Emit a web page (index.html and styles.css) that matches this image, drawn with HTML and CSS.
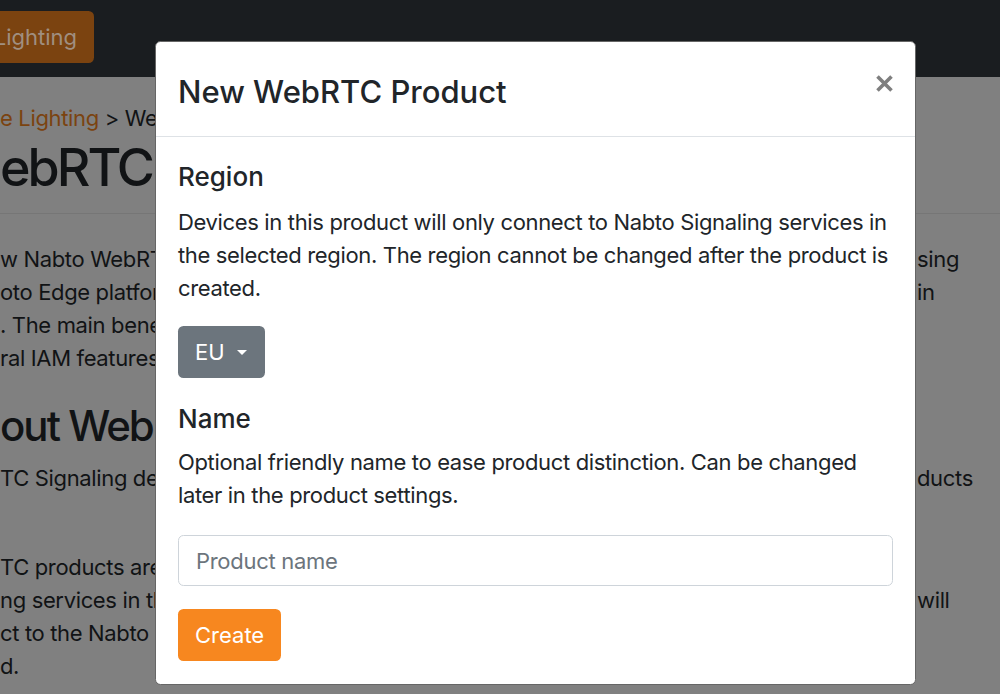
FILE: index.html
```html
<!DOCTYPE html>
<html>
<head>
    <title>New WebRTC Product</title>
    <meta name="viewport" content="width=device-width, initial-scale=1">
    <link rel="stylesheet" href="styles.css">
</head>

<body>
    <nav class="navbar">
        <a class="nav-btn" href="#">Lighting</a>
    </nav>

    <main class="page">
        <div class="crumbs"><a href="#">e Lighting</a> &gt; WebRTC</div>
        <h1 class="page-title">ebRTC</h1>
        <hr class="rule">

        <div class="line"><span class="left">w Nabto WebRTC Signaling products let devices connect</span><span class="right">sing</span></div>
        <div class="line"><span class="left">oto Edge platform to browsers and mobile apps</span><span class="right">in</span></div>
        <div class="line"><span class="left">. The main benefit is simple integration with</span><span class="right"></span></div>
        <div class="line"><span class="left">ral IAM features</span><span class="right"></span></div>

        <h2 class="page-sub">out WebRTC</h2>
        <div class="line"><span class="left">TC Signaling devices work differently from Edge products</span><span class="right">ducts</span></div>
        <div class="line"><span class="left"></span><span class="right"></span></div>

        <div class="line gap"><span class="left">TC products are bound to a region. Devices use the</span><span class="right"></span></div>
        <div class="line"><span class="left">ng services in the selected region only, and clients</span><span class="right">will</span></div>
        <div class="line"><span class="left">ct to the Nabto Signaling service of that region</span><span class="right"></span></div>
        <div class="line"><span class="left">d.</span><span class="right"></span></div>
    </main>

    <div class="modal">
        <div class="modal-header">
            <h5 class="modal-title">New WebRTC Product</h5>
            <button class="close" type="button" aria-label="Close">
                <svg width="17" height="17" viewBox="0 0 17 17">
                    <path d="M1.5 1.5 L15.5 15.5 M15.5 1.5 L1.5 15.5" stroke="#7f7f7f" stroke-width="3.6" fill="none"/>
                </svg>
            </button>
        </div>

        <div class="modal-body">
            <h5 class="section-title first">Region</h5>
            <p class="intro">Devices in this product will only connect to Nabto Signaling services in the selected region. The region cannot be changed after the product is created.</p>

            <div class="dropdown">
                <button class="btn btn-gray" type="button">EU <span class="caret"></span></button>
            </div>

            <h5 class="section-title">Name</h5>
            <p>Optional friendly name to ease product distinction. Can be changed later in the product settings.</p>

            <input class="field" type="text" placeholder="Product name">

            <button class="btn btn-orange" type="button">Create</button>
        </div>
    </div>
</body>
</html>
```

FILE: styles.css
```css
body {
    margin: 0;
    height: 694px;
    overflow: hidden;
    background-color: #808080;
    color: #111315;
    font-family: Inter, "Noto Sans", sans-serif;
    font-size: 22px;
    line-height: 33px;
    letter-spacing: -0.35px;
}

/* page behind the backdrop, colours already dimmed */
.navbar {
    height: 77px;
    background-color: #1a1d20;
    display: flex;
    align-items: flex-start;
    padding-top: 11px;
    box-sizing: border-box;
}

.nav-btn {
    width: 94px;
    height: 52px;
    box-sizing: border-box;
    padding-right: 17px;
    display: flex;
    align-items: center;
    justify-content: flex-end;
    background-color: #7b4310;
    color: #a08f80;
    text-decoration: none;
    letter-spacing: 0;
    border-radius: 0 5.5px 5.5px 0;
}

.page {
    padding-top: 25px;
    white-space: nowrap;
}

.crumbs a {
    color: #7b4310;
    text-decoration: none;
}

.page-title {
    margin: 0;
    font-size: 52px;
    font-weight: 500;
    line-height: 66px;
    letter-spacing: -3px;
}

.rule {
    margin: 12px 0 29px;
    border: 0;
    border-top: 1px solid #767676;
}

.page-sub {
    margin: 24px 0 10px;
    font-size: 42px;
    font-weight: 500;
    line-height: 53px;
    letter-spacing: -2px;
}

.line {
    display: grid;
    grid-template-columns: 917px 1fr;
    height: 33px;
}

.line.gap {
    margin-top: 23px;
}

.line .left {
    overflow: hidden;
}

/* modal */
.modal {
    position: fixed;
    top: 41px;
    left: 155px;
    width: 761px;
    box-sizing: border-box;
    background-color: #fff;
    border: 1px solid #666;
    border-radius: 5.5px;
    color: #212529;
}

.modal-header {
    display: flex;
    align-items: flex-start;
    padding: 27px 22px 22px;
    border-bottom: 1px solid #dee2e6;
}

.modal-title {
    margin: 0;
    font-size: 31px;
    font-weight: 500;
    line-height: 45px;
    letter-spacing: 0;
}

.close {
    margin: 6px 0 0 auto;
    padding: 0;
    border: 0;
    background: none;
    width: 17px;
    height: 17px;
}

.close svg {
    display: block;
}

.modal-body {
    padding: 25px 22px 23px;
}

.section-title {
    margin: 0 0 12px;
    font-size: 26px;
    font-weight: 500;
    line-height: 30px;
    letter-spacing: 0;
}

.section-title.first {
    margin-bottom: 14px;
}

.modal-body p {
    margin: 0 0 23px;
}

.modal-body p.intro {
    margin-bottom: 21px;
}

.dropdown {
    margin-bottom: 26px;
}

.btn {
    display: inline-flex;
    align-items: center;
    height: 52px;
    border: 0;
    border-radius: 5.5px;
    color: #fff;
    font-family: inherit;
    font-size: 22px;
    letter-spacing: 0;
}

.btn-gray {
    background-color: #6c757d;
    padding: 0 18px 0 17px;
    gap: 12px;
}

.caret {
    width: 0;
    height: 0;
    border-top: 5px solid #fff;
    border-left: 5px solid transparent;
    border-right: 5px solid transparent;
}

.btn-orange {
    background-color: #f7871f;
    padding: 0 17px;
}

.field {
    display: block;
    width: 100%;
    height: 51px;
    box-sizing: border-box;
    margin-bottom: 23px;
    padding: 0 17px;
    border: 1px solid #ced4da;
    border-radius: 5.5px;
    font-family: inherit;
    font-size: 22px;
    letter-spacing: -0.3px;
    color: #495057;
}

.field::placeholder {
    color: #6c757d;
}
```
